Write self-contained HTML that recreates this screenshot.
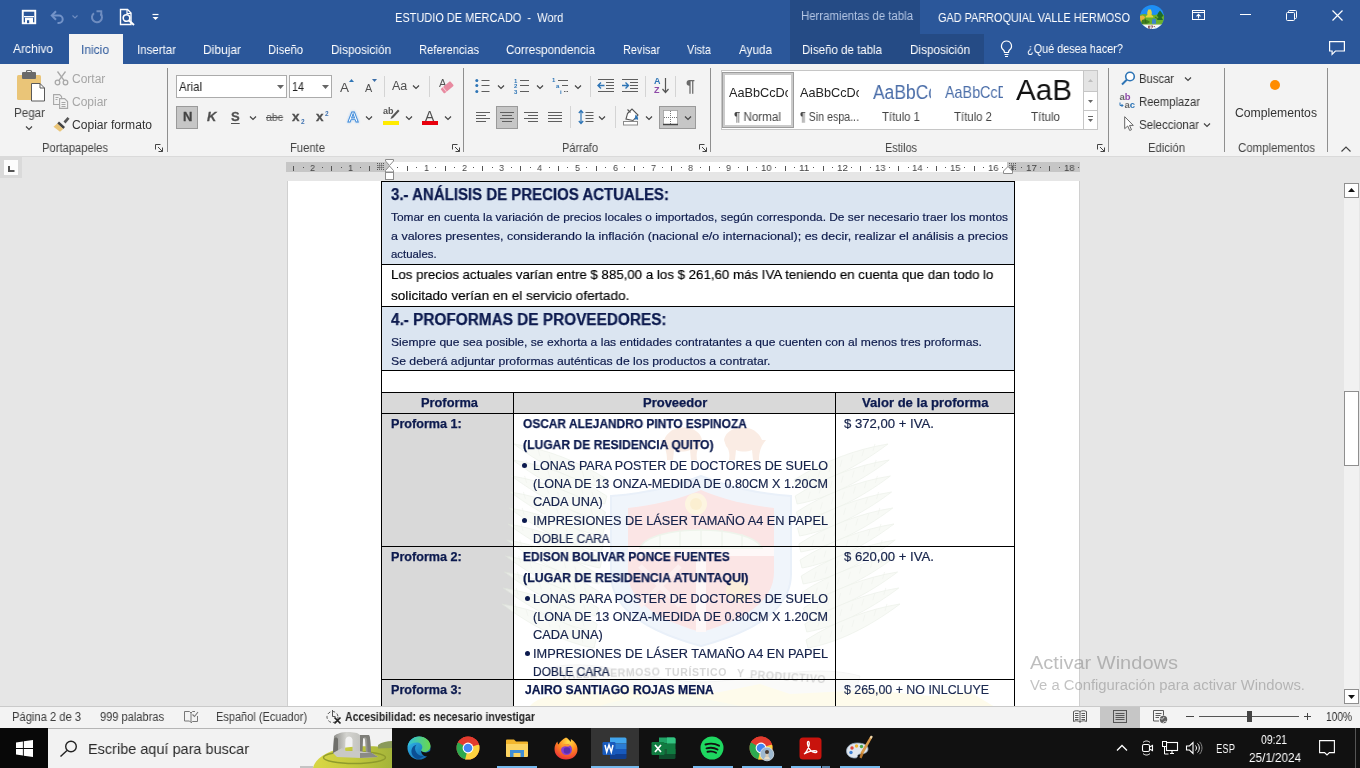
<!DOCTYPE html><html lang="es"><head><meta charset="utf-8"><title>ESTUDIO DE MERCADO - Word</title><style>*{box-sizing:border-box;margin:0;padding:0}
html,body{width:1360px;height:768px;overflow:hidden;background:#e6e6e6}
body{position:relative;font-family:"Liberation Sans",sans-serif;font-size:12px;color:#444}
.t{will-change:transform;position:absolute;white-space:pre;line-height:1;display:block;transform-origin:0 0}
.d{font-family:"Liberation Sans",sans-serif}
.a{position:absolute}
svg{position:absolute;overflow:visible}
svg text{will-change:transform}
.p{display:inline-block;width:0;height:0}
</style></head><body><div class="a" style="left:0;top:0;width:1360px;height:64px;background:#2b579a"></div><div class="a" style="left:790px;top:0;width:130px;height:34px;background:#254b85"></div><div class="a" style="left:790px;top:34px;width:194px;height:30px;background:#254b85"></div><div class="a" style="left:69px;top:34px;width:54px;height:30px;background:#f3f3f3"></div><div class="a" style="left:0;top:64px;width:1360px;height:93px;background:#f3f3f3;border-bottom:1px solid #dadada"></div><span class="t" style="left:395.40px;top:12.00px;font-size:12.6px;color:#fff;transform:scaleX(0.8719);">ESTUDIO DE MERCADO  -  Word</span><span class="t" style="left:800.50px;top:10.00px;font-size:12px;color:#b4c6e4;transform:scaleX(0.9487);">Herramientas de tabla</span><span class="t" style="left:938.00px;top:12.00px;font-size:12.6px;color:#fff;transform:scaleX(0.8636);">GAD PARROQUIAL VALLE HERMOSO</span><span class="t" style="left:13.00px;top:43.00px;font-size:12.6px;color:#fff;transform:scaleX(0.9524);">Archivo</span><span class="t" style="left:81.00px;top:44.00px;font-size:12.6px;color:#2b579a;transform:scaleX(0.9522);">Inicio</span><span class="t" style="left:137.00px;top:44.00px;font-size:12.6px;color:#fff;transform:scaleX(0.9133);">Insertar</span><span class="t" style="left:203.00px;top:44.00px;font-size:12.6px;color:#fff;transform:scaleX(0.9522);">Dibujar</span><span class="t" style="left:268.00px;top:44.00px;font-size:12.6px;color:#fff;transform:scaleX(0.8928);">Diseño</span><span class="t" style="left:331.00px;top:44.00px;font-size:12.6px;color:#fff;transform:scaleX(0.9316);">Disposición</span><span class="t" style="left:419.00px;top:44.00px;font-size:12.6px;color:#fff;transform:scaleX(0.8928);">Referencias</span><span class="t" style="left:506.00px;top:44.00px;font-size:12.6px;color:#fff;transform:scaleX(0.9278);">Correspondencia</span><span class="t" style="left:623.00px;top:44.00px;font-size:12.6px;color:#fff;transform:scaleX(0.8664);">Revisar</span><span class="t" style="left:687.00px;top:44.00px;font-size:12.6px;color:#fff;transform:scaleX(0.8639);">Vista</span><span class="t" style="left:739.00px;top:44.00px;font-size:12.6px;color:#fff;transform:scaleX(0.9300);">Ayuda</span><span class="t" style="left:802.00px;top:44.00px;font-size:12.6px;color:#fff;transform:scaleX(0.9140);">Diseño de tabla</span><span class="t" style="left:910.00px;top:44.00px;font-size:12.6px;color:#fff;transform:scaleX(0.9316);">Disposición</span><span class="t" style="left:1027.00px;top:43.00px;font-size:12.6px;color:#fff;transform:scaleX(0.8623);">¿Qué desea hacer?</span><svg style="left:21px;top:9px" width="16" height="16" viewBox="0 0 16 16" ><rect x="1.750" y="1.750" width="12.500" height="12.500" fill="none" stroke="#fff" stroke-width="1.900"/><rect x="4" y="8.700" width="8" height="5.500" fill="#fff"/><rect x="6" y="11.200" width="2.200" height="3" fill="#2b579a"/><rect x="3" y="7" width="10" height="1.200" fill="#fff"/></svg><svg style="left:50px;top:9px" width="16" height="16" viewBox="0 0 16 16" ><path d="M2.500 6.500h6.500a3.700 3.700 0 0 1 0 7.400h-1.500" fill="none" stroke="#7393c8" stroke-width="2"/><path d="M6 2.200L1.800 6.500l4.200 4.300" fill="none" stroke="#7393c8" stroke-width="2"/></svg><svg style="left:71.5px;top:14.5px" width="6" height="4" viewBox="0 0 6 4" ><path d="M0.500 0.500l2.500 2.500 2.500-2.500" fill="none" stroke="#6f8dc0" stroke-width="1.100"/></svg><svg style="left:89px;top:9px" width="16" height="16" viewBox="0 0 16 16" ><path d="M5 4.300A5 5 0 1 0 11.500 4.800" fill="none" stroke="#6f8dc0" stroke-width="2"/><path d="M7.500 2.200h4.800v4.800" fill="none" stroke="#6f8dc0" stroke-width="1.900"/></svg><svg style="left:119px;top:8px" width="17" height="18" viewBox="0 0 17 18" ><path d="M1.500 1.500h7l3.500 3.500v11.500h-10.500z" fill="none" stroke="#fff" stroke-width="1.400"/><path d="M8 1.500v4h4" fill="none" stroke="#fff" stroke-width="1.200"/><circle cx="7.500" cy="10" r="3.300" fill="#2b579a" stroke="#fff" stroke-width="1.600"/><path d="M10 12.500L15 17" stroke="#fff" stroke-width="2"/></svg><svg style="left:152px;top:13px" width="7" height="8" viewBox="0 0 7 8" ><path d="M0.500 1.500h6" stroke="#fff" stroke-width="1.200"/><path d="M0.500 4h6l-3 3z" fill="#fff"/></svg><svg style="left:1140px;top:4.7px" width="24" height="24" viewBox="0 0 24 24" ><defs><clipPath id="av"><circle cx="12" cy="12" r="12"/></clipPath></defs><g clip-path="url(#av)"><rect width="24" height="24" fill="#1e8ff5"/><path d="M0 10c3-1.500 6-1 8 0l3-0.500 4 0.500c3-1.500 6-1.500 9 0v10h-24z" fill="#6ab02c"/><path d="M7.500 10c-0.800-2 0-4.500 1.500-6 0.500 1 1 1.200 1.500 0 1.200 2 1.800 4 1 6 1 0.500 2 1.500 2 2.500h-8c0-1 1-2 2-2.500z" fill="#e6d33a"/><path d="M0 11c2-1 4-0.500 5 1l-1 4-4 1z" fill="#e8b23a"/><path d="M18 8l2-2.500 2 2.500 1.500 3-2 1 1.500 3h-6l1.500-3-1.500-1z" fill="#1f6b2a"/><path d="M2 15c3-1 6 0 8 2l-3 2h-6z" fill="#3f7d1e"/><path d="M12 19v-3.500a2 2 0 0 1 4 0v3.500z" fill="#3b86c9"/><path d="M5 13.500l1 5M15 12l3 2" stroke="#2f5f18" stroke-width="0.800"/><rect y="19.300" width="24" height="5" fill="#f4f6f8"/><path d="M3 19.300h18" stroke="#9bbf6a" stroke-width="0.800"/><path d="M8.500 21h1.200v2.500h-1.200zM10.500 21h2.500l-1.500 2.500M14 21l1 1.200" stroke="#7a3b3b" stroke-width="0.800" fill="none"/></g></svg><svg style="left:1192px;top:10px" width="13" height="10" viewBox="0 0 13 10" ><rect x="0.500" y="0.500" width="12" height="9" fill="none" stroke="#fff" stroke-width="1"/><path d="M0.500 2.500h12" stroke="#fff" stroke-width="1"/><path d="M6.500 8.500V4.500M4.500 6.300l2-2 2 2" fill="none" stroke="#fff" stroke-width="1.100"/></svg><div class="a" style="left:1240px;top:14px;width:11px;height:1px;background:#fff;"></div><svg style="left:1286px;top:10px" width="11" height="11" viewBox="0 0 11 11" ><rect x="0.500" y="2.500" width="8" height="8" rx="1" fill="none" stroke="#fff" stroke-width="1"/><path d="M2.500 2.500v-1a1 1 0 0 1 1-1h6a1 1 0 0 1 1 1v6a1 1 0 0 1-1 1h-1" fill="none" stroke="#fff" stroke-width="1"/></svg><svg style="left:1332px;top:10px" width="11" height="11" viewBox="0 0 11 11" ><path d="M0.500 0.500l10 10M10.500 0.500l-10 10" stroke="#fff" stroke-width="1.200"/></svg><svg style="left:1000px;top:40px" width="13" height="18" viewBox="0 0 13 18" ><path d="M6.500 1a5 5 0 0 0-3 9c0.800 0.800 1 1.600 1 2.500h4c0-0.900 0.200-1.700 1-2.500a5 5 0 0 0-3-9z" fill="none" stroke="#fff" stroke-width="1.200"/><path d="M4.500 14.500h4M5 16.500h3" stroke="#fff" stroke-width="1.200"/></svg><svg style="left:1329px;top:41px" width="16" height="14" viewBox="0 0 16 14" ><path d="M0.600 0.600h14.800v9.400h-9l-3.300 3.300v-3.300h-2.500z" fill="none" stroke="#fff" stroke-width="1.200"/></svg><svg style="left:16px;top:70px" width="30" height="32" viewBox="0 0 30 32" ><rect x="1" y="5" width="24" height="25" rx="1.500" fill="#eac578"/><rect x="6" y="2" width="14" height="7" rx="1" fill="#6a6a6a"/><rect x="10.500" y="0.500" width="5" height="4" rx="1" fill="none" stroke="#6a6a6a" stroke-width="1.200"/><path d="M15.500 13.500h8.500l4.500 4.500v13h-13z" fill="#fff" stroke="#5a5a5a" stroke-width="1"/><path d="M24 13.500v4.500h4.500" fill="none" stroke="#5a5a5a" stroke-width="1"/></svg><span class="t" style="left:14.00px;top:107.00px;font-size:12px;color:#444;transform:scaleX(0.9678);">Pegar</span><svg style="left:24.5px;top:125px" width="8" height="6" viewBox="0 0 8 6" ><path d="M1 1.5 L4 4.5 L7 1.5" fill="none" stroke="#444" stroke-width="1.2"/></svg><svg style="left:54px;top:71px" width="15" height="15" viewBox="0 0 15 15" ><g fill="none" stroke="#a8a8a8" stroke-width="1.300"><circle cx="3.500" cy="11.500" r="2.300"/><circle cx="11.500" cy="11.500" r="2.300"/><path d="M4.800 9.600L11.500 0.500M10.200 9.600L3.500 0.500"/></g></svg><span class="t" style="left:72.00px;top:73.00px;font-size:12px;color:#a6a6a6;transform:scaleX(0.9897);">Cortar</span><svg style="left:53px;top:94px" width="16" height="15" viewBox="0 0 16 15" ><g fill="none" stroke="#a8a8a8" stroke-width="1.100"><path d="M0.600 0.600h6l2 2v7.900h-8z"/><path d="M6.600 4.600h5l3 3v6.800h-8z" fill="#f3f3f3"/><path d="M8.500 8.500h4M8.500 10.500h4M8.500 12.500h4M2.500 3.500h3M2.500 5.500h2"/></g></svg><span class="t" style="left:72.00px;top:96.00px;font-size:12px;color:#a6a6a6;transform:scaleX(0.9898);">Copiar</span><svg style="left:53px;top:116px" width="17" height="16" viewBox="0 0 17 16" ><path d="M10.500 5.500l4-4.500 2 1.800-4 4.700z" fill="#555"/><path d="M6 5.500l6 5.500-1.800 2-6-5.500z" fill="#444"/><path d="M4.200 7.500l6 5.500-3.200 2.700-6.500-5z" fill="#eac578"/></svg><span class="t" style="left:72.00px;top:119.00px;font-size:12px;color:#333;transform:scaleX(1.0079);">Copiar formato</span><span class="t" style="left:42.00px;top:142.00px;font-size:12px;color:#444;transform:scaleX(0.9333);">Portapapeles</span><svg style="left:155px;top:144px" width="8" height="8" viewBox="0 0 8 8" ><path d="M0.500 5.500v-5h5M3 3l4.500 4.500M7.500 3.500v4h-4" fill="none" stroke="#444" stroke-width="1"/></svg><div class="a" style="left:167px;top:68px;width:1px;height:84px;background:#8f8f8f;"></div><div class="a" style="left:176px;top:75px;width:111px;height:23px;background:#fff;border:1px solid #ababab"></div><span class="t" style="left:179.00px;top:81.00px;font-size:12.6px;color:#222;transform:scaleX(0.9126);">Arial</span><svg style="left:276.5px;top:85px" width="7" height="4" viewBox="0 0 7 4" ><path d="M0 0h7l-3.5 4z" fill="#666"/></svg><div class="a" style="left:289px;top:75px;width:43px;height:23px;background:#fff;border:1px solid #ababab"></div><span class="t" style="left:292.00px;top:81.00px;font-size:12.6px;color:#222;transform:scaleX(0.8562);">14</span><svg style="left:321.5px;top:85px" width="7" height="4" viewBox="0 0 7 4" ><path d="M0 0h7l-3.5 4z" fill="#666"/></svg><span class="t" style="left:340.30px;top:81.00px;font-size:13.5px;color:#505050;">A</span><svg style="left:348.5px;top:79px" width="5" height="3" viewBox="0 0 5 3" ><path d="M0 3h5l-2.500-3z" fill="#2e75b6"/></svg><span class="t" style="left:365.20px;top:83.00px;font-size:10.8px;color:#505050;">A</span><svg style="left:372px;top:79px" width="5" height="3" viewBox="0 0 5 3" ><path d="M0 0h5l-2.500 3z" fill="#3b6ea8"/></svg><div class="a" style="left:384px;top:76px;width:1px;height:21px;background:#d4d4d4;"></div><span class="t" style="left:392.40px;top:80.00px;font-size:12.5px;color:#505050;transform:scaleX(0.9806);">Aa</span><svg style="left:411.5px;top:84px" width="8" height="6" viewBox="0 0 8 6" ><path d="M1 1.5 L4 4.5 L7 1.5" fill="none" stroke="#444" stroke-width="1.2"/></svg><div class="a" style="left:429px;top:76px;width:1px;height:21px;background:#d4d4d4;"></div><span class="t" style="left:438.80px;top:78.00px;font-size:11px;color:#555;">A</span><svg style="left:440px;top:81px" width="14" height="13" viewBox="0 0 14 13" ><g transform="rotate(-40 7 6.500)"><rect x="1" y="3.500" width="12.500" height="6" rx="1" fill="#e88aa0"/><rect x="3.500" y="3.500" width="0.900" height="6" fill="#f6d0d8"/></g></svg><div class="a" style="left:176px;top:106px;width:22px;height:23px;background:#c6c6c6;border:1px solid #9a9a9a"></div><span class="t" style="left:182.50px;top:110.00px;font-size:13px;color:#444;font-weight:700;-webkit-text-stroke:0.3px #444;">N</span><span class="t" style="left:206.50px;top:110.00px;font-size:13px;color:#505050;font-weight:700;font-style:italic;-webkit-text-stroke:0.3px #505050;">K</span><span class="t" style="left:230.50px;top:110.00px;font-size:13px;color:#505050;font-weight:700;-webkit-text-stroke:0.3px #505050;text-decoration:underline;text-underline-offset:2px">S</span><svg style="left:248.5px;top:115px" width="8" height="6" viewBox="0 0 8 6" ><path d="M1 1.5 L4 4.5 L7 1.5" fill="none" stroke="#444" stroke-width="1.2"/></svg><span class="t" style="left:266.00px;top:112.00px;font-size:11px;color:#555;transform:scaleX(0.9577);text-decoration:line-through">abc</span><span class="t" style="left:292.00px;top:110.00px;font-size:13.5px;color:#505050;font-weight:700;-webkit-text-stroke:0.3px #505050;">x</span><span class="t" style="left:300.50px;top:119.00px;font-size:6.5px;color:#3f72b0;font-weight:700;">2</span><span class="t" style="left:316.00px;top:110.00px;font-size:13.5px;color:#505050;font-weight:700;-webkit-text-stroke:0.3px #505050;">x</span><span class="t" style="left:324.50px;top:111.00px;font-size:6.5px;color:#3f72b0;font-weight:700;">2</span><svg style="left:345px;top:108px" width="17" height="17" viewBox="0 0 17 17" ><text x="8" y="14" text-anchor="middle" font-family="Liberation Sans,sans-serif" font-size="15.500" font-weight="700" fill="#fff" stroke="#3f8ad8" stroke-width="0.900" style="filter:drop-shadow(0 0 1px #9cc8f5)">A</text></svg><svg style="left:365px;top:115px" width="8" height="6" viewBox="0 0 8 6" ><path d="M1 1.5 L4 4.5 L7 1.5" fill="none" stroke="#444" stroke-width="1.2"/></svg><span class="t" style="left:383.00px;top:107.00px;font-size:9px;color:#555;font-weight:700;">ab</span><svg style="left:389px;top:109px" width="11" height="11" viewBox="0 0 11 11" ><path d="M9 0.500l1.500 1.500-6.500 7-2.500 1 1-2.500z" fill="#555"/></svg><div class="a" style="left:383px;top:121px;width:16px;height:4px;background:#ffeb00;"></div><svg style="left:404.5px;top:115px" width="8" height="6" viewBox="0 0 8 6" ><path d="M1 1.5 L4 4.5 L7 1.5" fill="none" stroke="#444" stroke-width="1.2"/></svg><span class="t" style="left:425.30px;top:110.00px;font-size:13.8px;color:#505050;">A</span><div class="a" style="left:422px;top:121px;width:16px;height:4px;background:#e8000d;"></div><svg style="left:443.5px;top:115px" width="8" height="6" viewBox="0 0 8 6" ><path d="M1 1.5 L4 4.5 L7 1.5" fill="none" stroke="#444" stroke-width="1.2"/></svg><span class="t" style="left:290.00px;top:142.00px;font-size:12px;color:#444;transform:scaleX(0.9368);">Fuente</span><svg style="left:452px;top:144px" width="8" height="8" viewBox="0 0 8 8" ><path d="M0.500 5.500v-5h5M3 3l4.500 4.500M7.500 3.500v4h-4" fill="none" stroke="#444" stroke-width="1"/></svg><div class="a" style="left:463px;top:68px;width:1px;height:84px;background:#8f8f8f;"></div><svg style="left:475px;top:78px" width="16" height="16" viewBox="0 0 16 16" ><g fill="#2e75b6"><circle cx="1.800" cy="2.500" r="1.500"/><circle cx="1.800" cy="7.500" r="1.500"/><circle cx="1.800" cy="13.500" r="1.500"/></g><path d="M6.500 2.500h8M6.500 7.500h8M6.500 13.500h8" stroke="#5e5e5e" stroke-width="1"/></svg><svg style="left:496.5px;top:84px" width="8" height="6" viewBox="0 0 8 6" ><path d="M1 1.5 L4 4.5 L7 1.5" fill="none" stroke="#444" stroke-width="1.2"/></svg><svg style="left:514px;top:77px" width="16" height="18" viewBox="0 0 16 18" ><path d="M6 3.500h9M6 8.500h9M6 14.500h9" stroke="#5e5e5e" stroke-width="1"/><g font-family="Liberation Sans,sans-serif" font-size="6" font-weight="700" fill="#2e75b6"><text x="0" y="5.500">1</text><text x="0" y="11">2</text><text x="0" y="16.500">3</text></g></svg><svg style="left:535.5px;top:84px" width="8" height="6" viewBox="0 0 8 6" ><path d="M1 1.5 L4 4.5 L7 1.5" fill="none" stroke="#444" stroke-width="1.2"/></svg><svg style="left:552px;top:77px" width="17" height="18" viewBox="0 0 17 18" ><path d="M6 3.500h10M10 8.500h6M12 14.500h1.500M14.500 14.500h1.500" stroke="#5e5e5e" stroke-width="1"/><g font-family="Liberation Sans,sans-serif" font-size="6" font-weight="700" fill="#2e75b6"><text x="0" y="5">1</text><text x="4" y="11">a</text><text x="8" y="17">i</text></g></svg><svg style="left:573.5px;top:84px" width="8" height="6" viewBox="0 0 8 6" ><path d="M1 1.5 L4 4.5 L7 1.5" fill="none" stroke="#444" stroke-width="1.2"/></svg><div class="a" style="left:590px;top:76px;width:1px;height:21px;background:#d4d4d4;"></div><svg style="left:598px;top:78px" width="16" height="15" viewBox="0 0 16 15" ><path d="M0 1.500h16M8 4.500h8M8 7.500h8M8 10.500h8M0 13.500h16" stroke="#5e5e5e" stroke-width="1"/><path d="M6.500 7.500h-6M3 4.500l-3 3 3 3" fill="none" stroke="#2e75b6" stroke-width="1.400"/></svg><svg style="left:622px;top:78px" width="16" height="15" viewBox="0 0 16 15" ><path d="M0 1.500h16M8 4.500h8M8 7.500h8M8 10.500h8M0 13.500h16" stroke="#5e5e5e" stroke-width="1"/><path d="M0 7.500h6M3.500 4.500l3 3-3 3" fill="none" stroke="#2e75b6" stroke-width="1.400"/></svg><div class="a" style="left:645px;top:76px;width:1px;height:21px;background:#d4d4d4;"></div><svg style="left:654px;top:76px" width="15" height="19" viewBox="0 0 15 19" ><g font-family="Liberation Sans,sans-serif" font-size="9" font-weight="700"><text x="0" y="8" fill="#2e75b6">A</text><text x="0" y="17" fill="#8e4aa8">Z</text></g><path d="M11.500 2v14M8.500 13l3 3.500 3-3.500" fill="none" stroke="#555" stroke-width="1.200"/></svg><div class="a" style="left:675px;top:76px;width:1px;height:21px;background:#d4d4d4;"></div><span class="t" style="left:686.00px;top:79.00px;font-size:16px;color:#6a6a6a;font-weight:700;">¶</span><svg style="left:476px;top:112px" width="14" height="12" viewBox="0 0 14 12" ><path d="M0 0.5h14" stroke="#5e5e5e" stroke-width="1"/><path d="M0 3.5h10" stroke="#5e5e5e" stroke-width="1"/><path d="M0 6.5h14" stroke="#5e5e5e" stroke-width="1"/><path d="M0 9.5h10" stroke="#5e5e5e" stroke-width="1"/></svg><div class="a" style="left:496px;top:106px;width:22px;height:23px;background:#c6c6c6;border:1px solid #9a9a9a"></div><svg style="left:500px;top:112px" width="14" height="12" viewBox="0 0 14 12" ><path d="M0.0 0.5h14" stroke="#5e5e5e" stroke-width="1"/><path d="M2.0 3.5h10" stroke="#5e5e5e" stroke-width="1"/><path d="M0.0 6.5h14" stroke="#5e5e5e" stroke-width="1"/><path d="M2.0 9.5h10" stroke="#5e5e5e" stroke-width="1"/></svg><svg style="left:524px;top:112px" width="14" height="12" viewBox="0 0 14 12" ><path d="M0 0.5h14" stroke="#5e5e5e" stroke-width="1"/><path d="M4 3.5h10" stroke="#5e5e5e" stroke-width="1"/><path d="M0 6.5h14" stroke="#5e5e5e" stroke-width="1"/><path d="M4 9.5h10" stroke="#5e5e5e" stroke-width="1"/></svg><svg style="left:548px;top:112px" width="14" height="12" viewBox="0 0 14 12" ><path d="M0 0.5h14" stroke="#5e5e5e" stroke-width="1"/><path d="M0 3.5h14" stroke="#5e5e5e" stroke-width="1"/><path d="M0 6.5h14" stroke="#5e5e5e" stroke-width="1"/><path d="M0 9.5h14" stroke="#5e5e5e" stroke-width="1"/></svg><div class="a" style="left:570px;top:106px;width:1px;height:22px;background:#d4d4d4;"></div><svg style="left:578px;top:109px" width="16" height="17" viewBox="0 0 16 17" ><path d="M7.500 3.500h8M7.500 6.500h8M7.500 9.500h8M7.500 12.500h8" stroke="#5e5e5e" stroke-width="1"/><path d="M3 1.500v13M0.800 4l2.200-2.500 2.200 2.500M0.800 12l2.200 2.500 2.200-2.500" fill="none" stroke="#2e75b6" stroke-width="1.200"/></svg><svg style="left:597.5px;top:115px" width="8" height="6" viewBox="0 0 8 6" ><path d="M1 1.5 L4 4.5 L7 1.5" fill="none" stroke="#444" stroke-width="1.2"/></svg><div class="a" style="left:615px;top:106px;width:1px;height:22px;background:#d4d4d4;"></div><svg style="left:622px;top:108px" width="18" height="18" viewBox="0 0 18 18" ><path d="M5.500 5.500l4.500-4.500 6 6-5 5.500-7-1.500z" fill="#fff" stroke="#555" stroke-width="1.100"/><path d="M5.500 1.500l3 3" stroke="#555" stroke-width="1.100"/><path d="M13.500 6.500c2 1.500 3 3.500 2.500 5.500-1-1-2.500-1-3.500 0z" fill="#2e75b6"/><rect x="1.500" y="13.500" width="14" height="3.500" fill="#fff" stroke="#8a8a8a" stroke-width="1"/></svg><svg style="left:644.5px;top:115px" width="8" height="6" viewBox="0 0 8 6" ><path d="M1 1.5 L4 4.5 L7 1.5" fill="none" stroke="#444" stroke-width="1.2"/></svg><div class="a" style="left:659px;top:106px;width:37px;height:23px;background:#c6c6c6;border:1px solid #9a9a9a"></div><svg style="left:663px;top:110px" width="15" height="15" viewBox="0 0 15 15" ><rect x="0.500" y="0.500" width="14" height="14" fill="#fff" stroke="#777" stroke-width="1" stroke-dasharray="1 1"/><path d="M7.500 1v13M1 7.500h13" stroke="#777" stroke-width="1" stroke-dasharray="1 1"/><path d="M0 14.500h15" stroke="#444" stroke-width="1.500"/></svg><svg style="left:683.5px;top:115px" width="8" height="6" viewBox="0 0 8 6" ><path d="M1 1.5 L4 4.5 L7 1.5" fill="none" stroke="#444" stroke-width="1.2"/></svg><span class="t" style="left:562.00px;top:142.00px;font-size:12px;color:#444;transform:scaleX(0.9146);">Párrafo</span><svg style="left:699px;top:144px" width="8" height="8" viewBox="0 0 8 8" ><path d="M0.500 5.500v-5h5M3 3l4.500 4.500M7.500 3.500v4h-4" fill="none" stroke="#444" stroke-width="1"/></svg><div class="a" style="left:710px;top:68px;width:1px;height:84px;background:#8f8f8f;"></div><div class="a" style="left:721px;top:70px;width:377px;height:60px;background:#fff;border:1px solid #c6c6c6"></div><div class="a" style="left:722px;top:72px;width:72px;height:56px;background:#fff;border:1px solid #9d9d9d;box-shadow:inset 0 0 0 2px #cbcbcb"></div><div class="a" style="left:729px;top:80px;width:58.5px;height:22px;overflow:hidden"><span class="t" style="left:0.00px;top:7.00px;font-size:12.7px;color:#222;transform:scaleX(0.9990);">AaBbCcDc</span></div><span class="t" style="left:734.00px;top:111.00px;font-size:12px;color:#444;transform:scaleX(0.9700);">¶ Normal</span><div class="a" style="left:800px;top:80px;width:58.5px;height:22px;overflow:hidden"><span class="t" style="left:0.00px;top:7.00px;font-size:12.7px;color:#222;transform:scaleX(0.9990);">AaBbCcDc</span></div><span class="t" style="left:800.00px;top:111.00px;font-size:12px;color:#444;transform:scaleX(0.8874);">¶ Sin espa...</span><div class="a" style="left:872.5px;top:76px;width:58.5px;height:28px;overflow:hidden"><span class="t" style="left:0.00px;top:6.00px;font-size:20px;color:#4a6da8;transform:scaleX(0.8722);">AaBbCc</span></div><span class="t" style="left:882.00px;top:111.00px;font-size:12px;color:#444;transform:scaleX(0.9493);">Título 1</span><div class="a" style="left:944.5px;top:76px;width:58.5px;height:28px;overflow:hidden"><span class="t" style="left:0.00px;top:8.00px;font-size:17px;color:#4a6da8;transform:scaleX(0.8440);">AaBbCcD</span></div><span class="t" style="left:954.00px;top:111.00px;font-size:12px;color:#444;transform:scaleX(0.9493);">Título 2</span><div class="a" style="left:1016px;top:78.5px;width:58px;height:24px;overflow:hidden"><span class="t" style="left:0.00px;top:-4.00px;font-size:30px;color:#111;transform:scaleX(0.9873);">AaB</span></div><span class="t" style="left:1031.00px;top:111.00px;font-size:12px;color:#444;transform:scaleX(0.9662);">Título</span><div class="a" style="left:1083px;top:70px;width:15px;height:22px;background:#e4e4e4;border:1px solid #c6c6c6"></div><div class="a" style="left:1083px;top:91px;width:15px;height:20px;background:#fff;border:1px solid #c6c6c6"></div><div class="a" style="left:1083px;top:110px;width:15px;height:20px;background:#fff;border:1px solid #c6c6c6"></div><svg style="left:1088px;top:79px" width="5" height="3" viewBox="0 0 5 3" ><path d="M0 3h5l-2.500-3z" fill="#bdbdbd"/></svg><svg style="left:1088px;top:100px" width="5" height="3" viewBox="0 0 5 3" ><path d="M0 0h5l-2.500 3z" fill="#666"/></svg><svg style="left:1088px;top:116px" width="5" height="7" viewBox="0 0 5 7" ><path d="M0 0.500h5" stroke="#666" stroke-width="1"/><path d="M0 3h5l-2.500 3z" fill="#666"/></svg><span class="t" style="left:885.00px;top:142.00px;font-size:12px;color:#444;transform:scaleX(0.9054);">Estilos</span><svg style="left:1097px;top:144px" width="8" height="8" viewBox="0 0 8 8" ><path d="M0.500 5.500v-5h5M3 3l4.500 4.500M7.500 3.500v4h-4" fill="none" stroke="#444" stroke-width="1"/></svg><div class="a" style="left:1108px;top:68px;width:1px;height:84px;background:#8f8f8f;"></div><svg style="left:1121px;top:71px" width="15" height="14" viewBox="0 0 15 14" ><circle cx="9" cy="5.500" r="4.300" fill="#fff" stroke="#2e75b6" stroke-width="1.600"/><path d="M6 8.500l-5 5" stroke="#2e75b6" stroke-width="2"/></svg><span class="t" style="left:1139.00px;top:73.00px;font-size:12px;color:#333;transform:scaleX(0.9368);">Buscar</span><svg style="left:1183.5px;top:76px" width="8" height="6" viewBox="0 0 8 6" ><path d="M1 1.5 L4 4.5 L7 1.5" fill="none" stroke="#444" stroke-width="1.2"/></svg><svg style="left:1119px;top:93px" width="18" height="16" viewBox="0 0 18 16" ><g font-family="Liberation Sans,sans-serif" font-weight="700"><text x="0.500" y="7" font-size="9.500"><tspan fill="#666">a</tspan><tspan fill="#8e4aa8">b</tspan></text><text x="5.500" y="14.500" font-size="9.500"><tspan fill="#666">a</tspan><tspan fill="#2e75b6">c</tspan></text></g><path d="M1 9.500v3h3M2.500 11l1.500 1.500-1.500 1.500" fill="none" stroke="#2e75b6" stroke-width="1"/></svg><span class="t" style="left:1139.00px;top:96.00px;font-size:12px;color:#333;transform:scaleX(0.9428);">Reemplazar</span><svg style="left:1124px;top:116px" width="10" height="16" viewBox="0 0 10 16" ><path d="M0.700 0.700v12l3-2.700 2 4.500 1.800-0.800-2-4.300h3.800z" fill="#fff" stroke="#666" stroke-width="1"/></svg><span class="t" style="left:1139.00px;top:119.00px;font-size:12px;color:#333;transform:scaleX(0.9569);">Seleccionar</span><svg style="left:1202.5px;top:122px" width="8" height="6" viewBox="0 0 8 6" ><path d="M1 1.5 L4 4.5 L7 1.5" fill="none" stroke="#444" stroke-width="1.2"/></svg><span class="t" style="left:1148.00px;top:142.00px;font-size:12px;color:#444;transform:scaleX(0.9401);">Edición</span><div class="a" style="left:1224px;top:68px;width:1px;height:84px;background:#8f8f8f;"></div><div class="a" style="left:1270px;top:80px;width:10px;height:10px;border-radius:50%;background:#ff8c00;filter:blur(0.5px)"></div><span class="t" style="left:1235.00px;top:107.00px;font-size:12px;color:#333;transform:scaleX(1.0161);">Complementos</span><span class="t" style="left:1238.00px;top:142.00px;font-size:12px;color:#444;transform:scaleX(0.9541);">Complementos</span><div class="a" style="left:1327px;top:68px;width:1px;height:84px;background:#8f8f8f;"></div><svg style="left:1341px;top:146px" width="10" height="6" viewBox="0 0 10 6" ><path d="M0.500 5.500l4.500-4.500 4.500 4.500" fill="none" stroke="#444" stroke-width="1.200"/></svg><div class="a" style="left:0px;top:157px;width:22px;height:21px;background:#dadada;"></div><div class="a" style="left:4px;top:160px;width:14px;height:15px;background:#fdfdfd;"></div><svg style="left:8px;top:166px" width="7" height="7" viewBox="0 0 7 7" ><path d="M1 0v5h5.500" fill="none" stroke="#555" stroke-width="2"/></svg><div class="a" style="left:286px;top:162px;width:794px;height:10px;background:#c6c6c6;"></div><div class="a" style="left:389px;top:162px;width:618px;height:10px;background:#fff;"></div><svg style="left:286px;top:162px" width="794" height="10" viewBox="0 0 794 10" ><rect x="7" y="4" width="1" height="5" fill="#555"/><rect x="17" y="5" width="1" height="1" fill="#555"/><rect x="36" y="5" width="1" height="1" fill="#555"/><rect x="45" y="4" width="1" height="5" fill="#555"/><rect x="55" y="5" width="1" height="1" fill="#555"/><rect x="74" y="5" width="1" height="1" fill="#555"/><rect x="83" y="4" width="1" height="5" fill="#555"/><rect x="92" y="5" width="1" height="1" fill="#555"/><rect x="111" y="5" width="1" height="1" fill="#555"/><rect x="121" y="4" width="1" height="5" fill="#555"/><rect x="130" y="5" width="1" height="1" fill="#555"/><rect x="149" y="5" width="1" height="1" fill="#555"/><rect x="159" y="4" width="1" height="5" fill="#555"/><rect x="168" y="5" width="1" height="1" fill="#555"/><rect x="187" y="5" width="1" height="1" fill="#555"/><rect x="196" y="4" width="1" height="5" fill="#555"/><rect x="206" y="5" width="1" height="1" fill="#555"/><rect x="225" y="5" width="1" height="1" fill="#555"/><rect x="234" y="4" width="1" height="5" fill="#555"/><rect x="244" y="5" width="1" height="1" fill="#555"/><rect x="263" y="5" width="1" height="1" fill="#555"/><rect x="272" y="4" width="1" height="5" fill="#555"/><rect x="281" y="5" width="1" height="1" fill="#555"/><rect x="300" y="5" width="1" height="1" fill="#555"/><rect x="310" y="4" width="1" height="5" fill="#555"/><rect x="319" y="5" width="1" height="1" fill="#555"/><rect x="338" y="5" width="1" height="1" fill="#555"/><rect x="348" y="4" width="1" height="5" fill="#555"/><rect x="357" y="5" width="1" height="1" fill="#555"/><rect x="376" y="5" width="1" height="1" fill="#555"/><rect x="385" y="4" width="1" height="5" fill="#555"/><rect x="395" y="5" width="1" height="1" fill="#555"/><rect x="414" y="5" width="1" height="1" fill="#555"/><rect x="423" y="4" width="1" height="5" fill="#555"/><rect x="433" y="5" width="1" height="1" fill="#555"/><rect x="452" y="5" width="1" height="1" fill="#555"/><rect x="461" y="4" width="1" height="5" fill="#555"/><rect x="470" y="5" width="1" height="1" fill="#555"/><rect x="489" y="5" width="1" height="1" fill="#555"/><rect x="499" y="4" width="1" height="5" fill="#555"/><rect x="508" y="5" width="1" height="1" fill="#555"/><rect x="527" y="5" width="1" height="1" fill="#555"/><rect x="537" y="4" width="1" height="5" fill="#555"/><rect x="546" y="5" width="1" height="1" fill="#555"/><rect x="565" y="5" width="1" height="1" fill="#555"/><rect x="574" y="4" width="1" height="5" fill="#555"/><rect x="584" y="5" width="1" height="1" fill="#555"/><rect x="603" y="5" width="1" height="1" fill="#555"/><rect x="612" y="4" width="1" height="5" fill="#555"/><rect x="622" y="5" width="1" height="1" fill="#555"/><rect x="641" y="5" width="1" height="1" fill="#555"/><rect x="650" y="4" width="1" height="5" fill="#555"/><rect x="659" y="5" width="1" height="1" fill="#555"/><rect x="678" y="5" width="1" height="1" fill="#555"/><rect x="688" y="4" width="1" height="5" fill="#555"/><rect x="697" y="5" width="1" height="1" fill="#555"/><rect x="716" y="5" width="1" height="1" fill="#555"/><rect x="726" y="4" width="1" height="5" fill="#555"/><rect x="735" y="5" width="1" height="1" fill="#555"/><rect x="754" y="5" width="1" height="1" fill="#555"/><rect x="763" y="4" width="1" height="5" fill="#555"/><rect x="773" y="5" width="1" height="1" fill="#555"/><rect x="792" y="5" width="1" height="1" fill="#555"/></svg><span class="t" style="left:423.80px;top:163.00px;font-size:9.9px;color:#444;transform:scaleX(0.9091);">1</span><span class="t" style="left:461.60px;top:163.00px;font-size:9.9px;color:#444;transform:scaleX(0.9091);">2</span><span class="t" style="left:499.40px;top:163.00px;font-size:9.9px;color:#444;transform:scaleX(0.9091);">3</span><span class="t" style="left:537.20px;top:163.00px;font-size:9.9px;color:#444;transform:scaleX(0.9091);">4</span><span class="t" style="left:575.00px;top:163.00px;font-size:9.9px;color:#444;transform:scaleX(0.9091);">5</span><span class="t" style="left:612.80px;top:163.00px;font-size:9.9px;color:#444;transform:scaleX(0.9091);">6</span><span class="t" style="left:650.60px;top:163.00px;font-size:9.9px;color:#444;transform:scaleX(0.9091);">7</span><span class="t" style="left:688.40px;top:163.00px;font-size:9.9px;color:#444;transform:scaleX(0.9091);">8</span><span class="t" style="left:726.20px;top:163.00px;font-size:9.9px;color:#444;transform:scaleX(0.9091);">9</span><span class="t" style="left:761.25px;top:163.00px;font-size:9.9px;color:#444;transform:scaleX(0.9559);">10</span><span class="t" style="left:799.05px;top:163.00px;font-size:9.9px;color:#444;transform:scaleX(1.0244);">11</span><span class="t" style="left:836.85px;top:163.00px;font-size:9.9px;color:#444;transform:scaleX(0.9559);">12</span><span class="t" style="left:874.65px;top:163.00px;font-size:9.9px;color:#444;transform:scaleX(0.9559);">13</span><span class="t" style="left:912.45px;top:163.00px;font-size:9.9px;color:#444;transform:scaleX(0.9559);">14</span><span class="t" style="left:950.25px;top:163.00px;font-size:9.9px;color:#444;transform:scaleX(0.9559);">15</span><span class="t" style="left:988.05px;top:163.00px;font-size:9.9px;color:#444;transform:scaleX(0.9559);">16</span><span class="t" style="left:1025.85px;top:163.00px;font-size:9.9px;color:#444;transform:scaleX(0.9559);">17</span><span class="t" style="left:1063.65px;top:163.00px;font-size:9.9px;color:#444;transform:scaleX(0.9559);">18</span><span class="t" style="left:348.10px;top:163.00px;font-size:9.9px;color:#444;transform:scaleX(0.9091);">1</span><span class="t" style="left:310.30px;top:163.00px;font-size:9.9px;color:#444;transform:scaleX(0.9091);">2</span><svg style="left:377px;top:163px" width="7" height="8" viewBox="0 0 7 8" ><rect x="0" y="0" width="1" height="1" fill="#555"/><rect x="0" y="2" width="1" height="1" fill="#555"/><rect x="0" y="4" width="1" height="1" fill="#555"/><rect x="0" y="6" width="1" height="1" fill="#555"/><rect x="2" y="0" width="1" height="1" fill="#555"/><rect x="2" y="2" width="1" height="1" fill="#555"/><rect x="2" y="4" width="1" height="1" fill="#555"/><rect x="2" y="6" width="1" height="1" fill="#555"/><rect x="4" y="0" width="1" height="1" fill="#555"/><rect x="4" y="2" width="1" height="1" fill="#555"/><rect x="4" y="4" width="1" height="1" fill="#555"/><rect x="4" y="6" width="1" height="1" fill="#555"/><rect x="6" y="0" width="1" height="1" fill="#555"/><rect x="6" y="2" width="1" height="1" fill="#555"/><rect x="6" y="4" width="1" height="1" fill="#555"/><rect x="6" y="6" width="1" height="1" fill="#555"/><path d="M0 2.500h7M0 4.500h7" stroke="#777" stroke-width="0.600"/><path d="M2.500 0v7M4.500 0v7" stroke="#777" stroke-width="0.600"/></svg><svg style="left:1009px;top:163px" width="7" height="8" viewBox="0 0 7 8" ><rect x="0" y="0" width="1" height="1" fill="#555"/><rect x="0" y="2" width="1" height="1" fill="#555"/><rect x="0" y="4" width="1" height="1" fill="#555"/><rect x="0" y="6" width="1" height="1" fill="#555"/><rect x="2" y="0" width="1" height="1" fill="#555"/><rect x="2" y="2" width="1" height="1" fill="#555"/><rect x="2" y="4" width="1" height="1" fill="#555"/><rect x="2" y="6" width="1" height="1" fill="#555"/><rect x="4" y="0" width="1" height="1" fill="#555"/><rect x="4" y="2" width="1" height="1" fill="#555"/><rect x="4" y="4" width="1" height="1" fill="#555"/><rect x="4" y="6" width="1" height="1" fill="#555"/><rect x="6" y="0" width="1" height="1" fill="#555"/><rect x="6" y="2" width="1" height="1" fill="#555"/><rect x="6" y="4" width="1" height="1" fill="#555"/><rect x="6" y="6" width="1" height="1" fill="#555"/><path d="M0 2.500h7M0 4.500h7" stroke="#777" stroke-width="0.600"/><path d="M2.500 0v7M4.500 0v7" stroke="#777" stroke-width="0.600"/></svg><svg style="left:385px;top:159px" width="9" height="22" viewBox="0 0 9 22" ><path d="M0.500 0.500h8v1.500l-4 4.500l-4-4.500z" fill="#fff" stroke="#8c8c8c" stroke-width="1"/><path d="M4.500 7l4 4.500v1.500h-8v-1.500z" fill="#fff" stroke="#8c8c8c" stroke-width="1"/><rect x="0.500" y="13.500" width="8" height="7" fill="#fff" stroke="#8c8c8c" stroke-width="1"/></svg><svg style="left:1003px;top:166px" width="10" height="8" viewBox="0 0 10 8" ><path d="M5 0.500l4.500 4.500v2.500h-9v-2.500z" fill="#fff" stroke="#8c8c8c" stroke-width="1"/></svg><div class="a" style="left:287px;top:181px;width:793px;height:525px;background:#fff;border-left:1px solid #d0d0d0;border-right:1px solid #d0d0d0"></div><div class="a" id="doc" style="left:288px;top:180px;width:791px;height:526px;overflow:hidden"><div class="a" style="left:-288px;top:-180px;width:1360px;height:768px"><div class="a" style="left:382px;top:181px;width:633px;height:83px;background:#dbe5f1;"></div><div class="a" style="left:382px;top:306px;width:633px;height:64px;background:#dbe5f1;"></div><div class="a" style="left:382px;top:392px;width:633px;height:21px;background:#d9d9d9;"></div><div class="a" style="left:382px;top:413px;width:131px;height:300px;background:#d9d9d9;"></div><svg style="left:0;top:0;opacity:0.58;filter:blur(0.7px)" width="1360" height="768" viewBox="0 0 1360 768"><path d="M606.0 488c-28-5-60-20-92-44 32 5 66 18 94 36z" fill="#f3f6f0" stroke="#e1e8dc" stroke-width="0.800"/><path d="M796.0 488c28-5 60-20 92-44-32 5-66 18-94 36z" fill="#f3f6f0" stroke="#e1e8dc" stroke-width="0.800"/><path d="M807.0 482.7l2-7" stroke="#e4eadf" stroke-width="0.700"/><path d="M595.0 482.7l-2-7" stroke="#e4eadf" stroke-width="0.700"/><path d="M818.0 477.4l2-7" stroke="#e4eadf" stroke-width="0.700"/><path d="M584.0 477.4l-2-7" stroke="#e4eadf" stroke-width="0.700"/><path d="M829.0 472.1l2-7" stroke="#e4eadf" stroke-width="0.700"/><path d="M573.0 472.1l-2-7" stroke="#e4eadf" stroke-width="0.700"/><path d="M840.0 466.8l2-7" stroke="#e4eadf" stroke-width="0.700"/><path d="M562.0 466.8l-2-7" stroke="#e4eadf" stroke-width="0.700"/><path d="M851.0 461.5l2-7" stroke="#e4eadf" stroke-width="0.700"/><path d="M551.0 461.5l-2-7" stroke="#e4eadf" stroke-width="0.700"/><path d="M862.0 456.2l2-7" stroke="#e4eadf" stroke-width="0.700"/><path d="M540.0 456.2l-2-7" stroke="#e4eadf" stroke-width="0.700"/><path d="M873.0 450.9l2-7" stroke="#e4eadf" stroke-width="0.700"/><path d="M529.0 450.9l-2-7" stroke="#e4eadf" stroke-width="0.700"/><path d="M604.8 504c-28-5-60-20-92-44 32 5 66 18 94 36z" fill="#f3f6f0" stroke="#e1e8dc" stroke-width="0.800"/><path d="M797.2 504c28-5 60-20 92-44-32 5-66 18-94 36z" fill="#f3f6f0" stroke="#e1e8dc" stroke-width="0.800"/><path d="M808.2 498.7l2-7" stroke="#e4eadf" stroke-width="0.700"/><path d="M593.8 498.7l-2-7" stroke="#e4eadf" stroke-width="0.700"/><path d="M819.2 493.4l2-7" stroke="#e4eadf" stroke-width="0.700"/><path d="M582.8 493.4l-2-7" stroke="#e4eadf" stroke-width="0.700"/><path d="M830.2 488.1l2-7" stroke="#e4eadf" stroke-width="0.700"/><path d="M571.8 488.1l-2-7" stroke="#e4eadf" stroke-width="0.700"/><path d="M841.2 482.8l2-7" stroke="#e4eadf" stroke-width="0.700"/><path d="M560.8 482.8l-2-7" stroke="#e4eadf" stroke-width="0.700"/><path d="M852.2 477.5l2-7" stroke="#e4eadf" stroke-width="0.700"/><path d="M549.8 477.5l-2-7" stroke="#e4eadf" stroke-width="0.700"/><path d="M863.2 472.2l2-7" stroke="#e4eadf" stroke-width="0.700"/><path d="M538.8 472.2l-2-7" stroke="#e4eadf" stroke-width="0.700"/><path d="M874.2 466.9l2-7" stroke="#e4eadf" stroke-width="0.700"/><path d="M527.8 466.9l-2-7" stroke="#e4eadf" stroke-width="0.700"/><path d="M603.6 520c-28-5-60-20-92-44 32 5 66 18 94 36z" fill="#f3f6f0" stroke="#e1e8dc" stroke-width="0.800"/><path d="M798.4 520c28-5 60-20 92-44-32 5-66 18-94 36z" fill="#f3f6f0" stroke="#e1e8dc" stroke-width="0.800"/><path d="M809.4 514.7l2-7" stroke="#e4eadf" stroke-width="0.700"/><path d="M592.6 514.7l-2-7" stroke="#e4eadf" stroke-width="0.700"/><path d="M820.4 509.4l2-7" stroke="#e4eadf" stroke-width="0.700"/><path d="M581.6 509.4l-2-7" stroke="#e4eadf" stroke-width="0.700"/><path d="M831.4 504.1l2-7" stroke="#e4eadf" stroke-width="0.700"/><path d="M570.6 504.1l-2-7" stroke="#e4eadf" stroke-width="0.700"/><path d="M842.4 498.8l2-7" stroke="#e4eadf" stroke-width="0.700"/><path d="M559.6 498.8l-2-7" stroke="#e4eadf" stroke-width="0.700"/><path d="M853.4 493.5l2-7" stroke="#e4eadf" stroke-width="0.700"/><path d="M548.6 493.5l-2-7" stroke="#e4eadf" stroke-width="0.700"/><path d="M864.4 488.2l2-7" stroke="#e4eadf" stroke-width="0.700"/><path d="M537.6 488.2l-2-7" stroke="#e4eadf" stroke-width="0.700"/><path d="M875.4 482.9l2-7" stroke="#e4eadf" stroke-width="0.700"/><path d="M526.6 482.9l-2-7" stroke="#e4eadf" stroke-width="0.700"/><path d="M602.4 536c-28-5-60-20-92-44 32 5 66 18 94 36z" fill="#f3f6f0" stroke="#e1e8dc" stroke-width="0.800"/><path d="M799.6 536c28-5 60-20 92-44-32 5-66 18-94 36z" fill="#f3f6f0" stroke="#e1e8dc" stroke-width="0.800"/><path d="M810.6 530.7l2-7" stroke="#e4eadf" stroke-width="0.700"/><path d="M591.4 530.7l-2-7" stroke="#e4eadf" stroke-width="0.700"/><path d="M821.6 525.4l2-7" stroke="#e4eadf" stroke-width="0.700"/><path d="M580.4 525.4l-2-7" stroke="#e4eadf" stroke-width="0.700"/><path d="M832.6 520.1l2-7" stroke="#e4eadf" stroke-width="0.700"/><path d="M569.4 520.1l-2-7" stroke="#e4eadf" stroke-width="0.700"/><path d="M843.6 514.8l2-7" stroke="#e4eadf" stroke-width="0.700"/><path d="M558.4 514.8l-2-7" stroke="#e4eadf" stroke-width="0.700"/><path d="M854.6 509.5l2-7" stroke="#e4eadf" stroke-width="0.700"/><path d="M547.4 509.5l-2-7" stroke="#e4eadf" stroke-width="0.700"/><path d="M865.6 504.2l2-7" stroke="#e4eadf" stroke-width="0.700"/><path d="M536.4 504.2l-2-7" stroke="#e4eadf" stroke-width="0.700"/><path d="M876.6 498.9l2-7" stroke="#e4eadf" stroke-width="0.700"/><path d="M525.4 498.9l-2-7" stroke="#e4eadf" stroke-width="0.700"/><path d="M601.2 552c-28-5-60-20-92-44 32 5 66 18 94 36z" fill="#f3f6f0" stroke="#e1e8dc" stroke-width="0.800"/><path d="M800.8 552c28-5 60-20 92-44-32 5-66 18-94 36z" fill="#f3f6f0" stroke="#e1e8dc" stroke-width="0.800"/><path d="M811.8 546.7l2-7" stroke="#e4eadf" stroke-width="0.700"/><path d="M590.2 546.7l-2-7" stroke="#e4eadf" stroke-width="0.700"/><path d="M822.8 541.4l2-7" stroke="#e4eadf" stroke-width="0.700"/><path d="M579.2 541.4l-2-7" stroke="#e4eadf" stroke-width="0.700"/><path d="M833.8 536.1l2-7" stroke="#e4eadf" stroke-width="0.700"/><path d="M568.2 536.1l-2-7" stroke="#e4eadf" stroke-width="0.700"/><path d="M844.8 530.8l2-7" stroke="#e4eadf" stroke-width="0.700"/><path d="M557.2 530.8l-2-7" stroke="#e4eadf" stroke-width="0.700"/><path d="M855.8 525.5l2-7" stroke="#e4eadf" stroke-width="0.700"/><path d="M546.2 525.5l-2-7" stroke="#e4eadf" stroke-width="0.700"/><path d="M866.8 520.2l2-7" stroke="#e4eadf" stroke-width="0.700"/><path d="M535.2 520.2l-2-7" stroke="#e4eadf" stroke-width="0.700"/><path d="M877.8 514.9l2-7" stroke="#e4eadf" stroke-width="0.700"/><path d="M524.2 514.9l-2-7" stroke="#e4eadf" stroke-width="0.700"/><path d="M600.0 568c-28-5-60-20-92-44 32 5 66 18 94 36z" fill="#f3f6f0" stroke="#e1e8dc" stroke-width="0.800"/><path d="M802.0 568c28-5 60-20 92-44-32 5-66 18-94 36z" fill="#f3f6f0" stroke="#e1e8dc" stroke-width="0.800"/><path d="M813.0 562.7l2-7" stroke="#e4eadf" stroke-width="0.700"/><path d="M589.0 562.7l-2-7" stroke="#e4eadf" stroke-width="0.700"/><path d="M824.0 557.4l2-7" stroke="#e4eadf" stroke-width="0.700"/><path d="M578.0 557.4l-2-7" stroke="#e4eadf" stroke-width="0.700"/><path d="M835.0 552.1l2-7" stroke="#e4eadf" stroke-width="0.700"/><path d="M567.0 552.1l-2-7" stroke="#e4eadf" stroke-width="0.700"/><path d="M846.0 546.8l2-7" stroke="#e4eadf" stroke-width="0.700"/><path d="M556.0 546.8l-2-7" stroke="#e4eadf" stroke-width="0.700"/><path d="M857.0 541.5l2-7" stroke="#e4eadf" stroke-width="0.700"/><path d="M545.0 541.5l-2-7" stroke="#e4eadf" stroke-width="0.700"/><path d="M868.0 536.2l2-7" stroke="#e4eadf" stroke-width="0.700"/><path d="M534.0 536.2l-2-7" stroke="#e4eadf" stroke-width="0.700"/><path d="M879.0 530.9l2-7" stroke="#e4eadf" stroke-width="0.700"/><path d="M523.0 530.9l-2-7" stroke="#e4eadf" stroke-width="0.700"/><path d="M598.8 584c-28-5-60-20-92-44 32 5 66 18 94 36z" fill="#f3f6f0" stroke="#e1e8dc" stroke-width="0.800"/><path d="M803.2 584c28-5 60-20 92-44-32 5-66 18-94 36z" fill="#f3f6f0" stroke="#e1e8dc" stroke-width="0.800"/><path d="M814.2 578.7l2-7" stroke="#e4eadf" stroke-width="0.700"/><path d="M587.8 578.7l-2-7" stroke="#e4eadf" stroke-width="0.700"/><path d="M825.2 573.4l2-7" stroke="#e4eadf" stroke-width="0.700"/><path d="M576.8 573.4l-2-7" stroke="#e4eadf" stroke-width="0.700"/><path d="M836.2 568.1l2-7" stroke="#e4eadf" stroke-width="0.700"/><path d="M565.8 568.1l-2-7" stroke="#e4eadf" stroke-width="0.700"/><path d="M847.2 562.8l2-7" stroke="#e4eadf" stroke-width="0.700"/><path d="M554.8 562.8l-2-7" stroke="#e4eadf" stroke-width="0.700"/><path d="M858.2 557.5l2-7" stroke="#e4eadf" stroke-width="0.700"/><path d="M543.8 557.5l-2-7" stroke="#e4eadf" stroke-width="0.700"/><path d="M869.2 552.2l2-7" stroke="#e4eadf" stroke-width="0.700"/><path d="M532.8 552.2l-2-7" stroke="#e4eadf" stroke-width="0.700"/><path d="M880.2 546.9l2-7" stroke="#e4eadf" stroke-width="0.700"/><path d="M521.8 546.9l-2-7" stroke="#e4eadf" stroke-width="0.700"/><path d="M597.6 600c-28-5-60-20-92-44 32 5 66 18 94 36z" fill="#f3f6f0" stroke="#e1e8dc" stroke-width="0.800"/><path d="M804.4 600c28-5 60-20 92-44-32 5-66 18-94 36z" fill="#f3f6f0" stroke="#e1e8dc" stroke-width="0.800"/><path d="M815.4 594.7l2-7" stroke="#e4eadf" stroke-width="0.700"/><path d="M586.6 594.7l-2-7" stroke="#e4eadf" stroke-width="0.700"/><path d="M826.4 589.4l2-7" stroke="#e4eadf" stroke-width="0.700"/><path d="M575.6 589.4l-2-7" stroke="#e4eadf" stroke-width="0.700"/><path d="M837.4 584.1l2-7" stroke="#e4eadf" stroke-width="0.700"/><path d="M564.6 584.1l-2-7" stroke="#e4eadf" stroke-width="0.700"/><path d="M848.4 578.8l2-7" stroke="#e4eadf" stroke-width="0.700"/><path d="M553.6 578.8l-2-7" stroke="#e4eadf" stroke-width="0.700"/><path d="M859.4 573.5l2-7" stroke="#e4eadf" stroke-width="0.700"/><path d="M542.6 573.5l-2-7" stroke="#e4eadf" stroke-width="0.700"/><path d="M870.4 568.2l2-7" stroke="#e4eadf" stroke-width="0.700"/><path d="M531.6 568.2l-2-7" stroke="#e4eadf" stroke-width="0.700"/><path d="M881.4 562.9l2-7" stroke="#e4eadf" stroke-width="0.700"/><path d="M520.6 562.9l-2-7" stroke="#e4eadf" stroke-width="0.700"/><path d="M596.4 616c-28-5-60-20-92-44 32 5 66 18 94 36z" fill="#f3f6f0" stroke="#e1e8dc" stroke-width="0.800"/><path d="M805.6 616c28-5 60-20 92-44-32 5-66 18-94 36z" fill="#f3f6f0" stroke="#e1e8dc" stroke-width="0.800"/><path d="M816.6 610.7l2-7" stroke="#e4eadf" stroke-width="0.700"/><path d="M585.4 610.7l-2-7" stroke="#e4eadf" stroke-width="0.700"/><path d="M827.6 605.4l2-7" stroke="#e4eadf" stroke-width="0.700"/><path d="M574.4 605.4l-2-7" stroke="#e4eadf" stroke-width="0.700"/><path d="M838.6 600.1l2-7" stroke="#e4eadf" stroke-width="0.700"/><path d="M563.4 600.1l-2-7" stroke="#e4eadf" stroke-width="0.700"/><path d="M849.6 594.8l2-7" stroke="#e4eadf" stroke-width="0.700"/><path d="M552.4 594.8l-2-7" stroke="#e4eadf" stroke-width="0.700"/><path d="M860.6 589.5l2-7" stroke="#e4eadf" stroke-width="0.700"/><path d="M541.4 589.5l-2-7" stroke="#e4eadf" stroke-width="0.700"/><path d="M871.6 584.2l2-7" stroke="#e4eadf" stroke-width="0.700"/><path d="M530.4 584.2l-2-7" stroke="#e4eadf" stroke-width="0.700"/><path d="M882.6 578.9l2-7" stroke="#e4eadf" stroke-width="0.700"/><path d="M519.4 578.9l-2-7" stroke="#e4eadf" stroke-width="0.700"/><path d="M595.2 632c-28-5-60-20-92-44 32 5 66 18 94 36z" fill="#f3f6f0" stroke="#e1e8dc" stroke-width="0.800"/><path d="M806.8 632c28-5 60-20 92-44-32 5-66 18-94 36z" fill="#f3f6f0" stroke="#e1e8dc" stroke-width="0.800"/><path d="M817.8 626.7l2-7" stroke="#e4eadf" stroke-width="0.700"/><path d="M584.2 626.7l-2-7" stroke="#e4eadf" stroke-width="0.700"/><path d="M828.8 621.4l2-7" stroke="#e4eadf" stroke-width="0.700"/><path d="M573.2 621.4l-2-7" stroke="#e4eadf" stroke-width="0.700"/><path d="M839.8 616.1l2-7" stroke="#e4eadf" stroke-width="0.700"/><path d="M562.2 616.1l-2-7" stroke="#e4eadf" stroke-width="0.700"/><path d="M850.8 610.8l2-7" stroke="#e4eadf" stroke-width="0.700"/><path d="M551.2 610.8l-2-7" stroke="#e4eadf" stroke-width="0.700"/><path d="M861.8 605.5l2-7" stroke="#e4eadf" stroke-width="0.700"/><path d="M540.2 605.5l-2-7" stroke="#e4eadf" stroke-width="0.700"/><path d="M872.8 600.2l2-7" stroke="#e4eadf" stroke-width="0.700"/><path d="M529.2 600.2l-2-7" stroke="#e4eadf" stroke-width="0.700"/><path d="M883.8 594.9l2-7" stroke="#e4eadf" stroke-width="0.700"/><path d="M518.2 594.9l-2-7" stroke="#e4eadf" stroke-width="0.700"/><path d="M594.0 648c-28-5-60-20-92-44 32 5 66 18 94 36z" fill="#f3f6f0" stroke="#e1e8dc" stroke-width="0.800"/><path d="M808.0 648c28-5 60-20 92-44-32 5-66 18-94 36z" fill="#f3f6f0" stroke="#e1e8dc" stroke-width="0.800"/><path d="M819.0 642.7l2-7" stroke="#e4eadf" stroke-width="0.700"/><path d="M583.0 642.7l-2-7" stroke="#e4eadf" stroke-width="0.700"/><path d="M830.0 637.4l2-7" stroke="#e4eadf" stroke-width="0.700"/><path d="M572.0 637.4l-2-7" stroke="#e4eadf" stroke-width="0.700"/><path d="M841.0 632.1l2-7" stroke="#e4eadf" stroke-width="0.700"/><path d="M561.0 632.1l-2-7" stroke="#e4eadf" stroke-width="0.700"/><path d="M852.0 626.8l2-7" stroke="#e4eadf" stroke-width="0.700"/><path d="M550.0 626.8l-2-7" stroke="#e4eadf" stroke-width="0.700"/><path d="M863.0 621.5l2-7" stroke="#e4eadf" stroke-width="0.700"/><path d="M539.0 621.5l-2-7" stroke="#e4eadf" stroke-width="0.700"/><path d="M874.0 616.2l2-7" stroke="#e4eadf" stroke-width="0.700"/><path d="M528.0 616.2l-2-7" stroke="#e4eadf" stroke-width="0.700"/><path d="M885.0 610.9l2-7" stroke="#e4eadf" stroke-width="0.700"/><path d="M517.0 610.9l-2-7" stroke="#e4eadf" stroke-width="0.700"/><path d="M664 440c4-10 14-14 24-12 8 1 13 6 14 12l-2 6c-3 3-4 8-3 14h-6l-1-10c-5 2-11 2-16 0l-1 10h-6c0-8-2-14-7-20z" fill="#f6dfd0"/><path d="M762 440c-4-10-14-14-24-12-8 1-13 6-14 12l2 6c3 3 4 8 3 14h6l1-10c5 2 11 2 16 0l1 10h6c0-8 2-14 7-20z" fill="#f6dfd0"/><path d="M611 496c30-2 60-8 90-20 30 12 60 18 90 20v78c0 36-38 58-90 72-52-14-90-36-90-72z" fill="#e6eef9" stroke="#d9e5f4" stroke-width="2"/><path d="M628 508c26-3 50-8 73-18 23 10 47 15 73 18v64c0 30-30 48-73 60-43-12-73-30-73-60z" fill="#f8d2d2"/><path d="M628 546h146v10h-146z" fill="#fdf3f3"/><path d="M696 552h10v80h-10z" fill="#fdf3f3"/><path d="M640 548c10-24 110-24 122 0z" fill="#f4f8f1" stroke="#e2ecdc" stroke-width="1.500"/><path d="M660 548v-14M680 548v-19M701 548v-21M722 548v-19M742 548v-14" stroke="#e2ecdc" stroke-width="1.200"/><circle cx="696" cy="504" r="11" fill="#fbeecb"/><circle cx="696" cy="504" r="6" fill="#f9e4b0"/><path d="M640 566l40 40M680 566l-40 40" stroke="#fbe6e6" stroke-width="5"/><circle cx="738" cy="590" r="12" fill="#fae3c0"/><path d="M548 668c50-12 100 14 152 14s110-20 160-6l-6 22c-50-10-100 6-152 6s-100-26-150-14z" fill="#f7f7f5" stroke="#ececec" stroke-width="1"/><text x="561" y="678.5" transform="rotate(-3 561 678.5)" font-family="Liberation Sans,sans-serif" font-size="10.500" font-weight="700" fill="#b9b9b9" letter-spacing="0.600">VALLE</text><text x="602" y="676.5" transform="rotate(-1.5 602 676.5)" font-family="Liberation Sans,sans-serif" font-size="10.500" font-weight="700" fill="#b9b9b9" letter-spacing="0.600">HERMOSO</text><text x="665" y="675.8" transform="rotate(0 665 675.8)" font-family="Liberation Sans,sans-serif" font-size="10.500" font-weight="700" fill="#b9b9b9" letter-spacing="0.600">TURÍSTICO</text><text x="737" y="676.5" transform="rotate(1.5 737 676.5)" font-family="Liberation Sans,sans-serif" font-size="10.500" font-weight="700" fill="#b9b9b9" letter-spacing="0.600">Y</text><text x="750" y="677.5" transform="rotate(4 750 677.5)" font-family="Liberation Sans,sans-serif" font-size="10.500" font-weight="700" fill="#b9b9b9" letter-spacing="0.600">PRODUCTIVO</text><path d="M530 706c10-12 40-16 80-14l20-6 30 8 60-2 40-8 30 10 80-4 60 6 40-4 30 18z" fill="#fdf9dc"/><path d="M600 706c30-10 60-12 100-8l40 8z" fill="#f4f7e6"/></svg><div class="a" style="left:381px;top:181px;width:634px;height:1px;background:#000;"></div><div class="a" style="left:381px;top:264px;width:634px;height:1px;background:#000;"></div><div class="a" style="left:381px;top:306px;width:634px;height:1px;background:#000;"></div><div class="a" style="left:381px;top:370px;width:634px;height:1px;background:#000;"></div><div class="a" style="left:381px;top:392px;width:634px;height:1px;background:#000;"></div><div class="a" style="left:381px;top:413px;width:634px;height:1px;background:#000;"></div><div class="a" style="left:381px;top:546px;width:634px;height:1px;background:#000;"></div><div class="a" style="left:381px;top:679px;width:634px;height:1px;background:#000;"></div><div class="a" style="left:381px;top:181px;width:1px;height:529px;background:#000;"></div><div class="a" style="left:1014px;top:181px;width:1px;height:529px;background:#000;"></div><div class="a" style="left:513px;top:392px;width:1px;height:318px;background:#000;"></div><div class="a" style="left:835px;top:392px;width:1px;height:318px;background:#000;"></div><span class="t" style="left:390.50px;top:187.00px;font-size:16px;color:#0c1a4e;font-weight:700;transform:scaleX(0.9372);-webkit-text-stroke:0.25px #0c1a4e;">3.- ANÁLISIS DE PRECIOS ACTUALES:</span><span class="t" style="left:390.50px;top:212.00px;font-size:11.4px;color:#0d1a4b;transform:scaleX(1.0456);-webkit-text-stroke:0.18px #0d1a4b;">Tomar en cuenta la variación de precios locales o importados, según corresponda. De ser necesario traer los montos</span><span class="t" style="left:390.50px;top:231.00px;font-size:11.4px;color:#0d1a4b;transform:scaleX(1.0961);-webkit-text-stroke:0.18px #0d1a4b;">a valores presentes, considerando la inflación (nacional e/o internacional); es decir, realizar el análisis a precios</span><span class="t" style="left:390.50px;top:249.00px;font-size:11.4px;color:#0d1a4b;transform:scaleX(0.9979);-webkit-text-stroke:0.18px #0d1a4b;">actuales.</span><span class="t" style="left:390.50px;top:268.00px;font-size:13.6px;color:#000;transform:scaleX(0.9774);-webkit-text-stroke:0.18px #000;">Los precios actuales varían entre $ 885,00 a los $ 261,60 más IVA teniendo en cuenta que dan todo lo</span><span class="t" style="left:390.50px;top:289.00px;font-size:13.6px;color:#000;transform:scaleX(0.9980);-webkit-text-stroke:0.18px #000;">solicitado verían en el servicio ofertado.</span><span class="t" style="left:390.50px;top:312.00px;font-size:16px;color:#0c1a4e;font-weight:700;transform:scaleX(0.9594);-webkit-text-stroke:0.25px #0c1a4e;">4.- PROFORMAS DE PROVEEDORES:</span><span class="t" style="left:390.50px;top:337.00px;font-size:11.4px;color:#0d1a4b;transform:scaleX(1.0615);-webkit-text-stroke:0.18px #0d1a4b;">Siempre que sea posible, se exhorta a las entidades contratantes a que cuenten con al menos tres proformas.</span><span class="t" style="left:390.50px;top:356.00px;font-size:11.4px;color:#0d1a4b;transform:scaleX(1.0741);-webkit-text-stroke:0.18px #0d1a4b;">Se deberá adjuntar proformas auténticas de los productos a contratar.</span><span class="t" style="left:420.50px;top:397.00px;font-size:12.2px;color:#0c1a4e;font-weight:700;transform:scaleX(1.0519);-webkit-text-stroke:0.25px #0c1a4e;">Proforma</span><span class="t" style="left:643.30px;top:397.00px;font-size:12.2px;color:#0c1a4e;font-weight:700;transform:scaleX(1.0647);-webkit-text-stroke:0.25px #0c1a4e;">Proveedor</span><span class="t" style="left:862.00px;top:397.00px;font-size:12.2px;color:#0c1a4e;font-weight:700;transform:scaleX(1.0733);-webkit-text-stroke:0.25px #0c1a4e;">Valor de la proforma</span><span class="t" style="left:390.50px;top:418.00px;font-size:12.2px;color:#0c1a4e;font-weight:700;transform:scaleX(1.0350);-webkit-text-stroke:0.25px #0c1a4e;">Proforma 1:</span><span class="t" style="left:522.50px;top:418.00px;font-size:12.4px;color:#0c1a4e;font-weight:700;transform:scaleX(0.9617);-webkit-text-stroke:0.25px #0c1a4e;">OSCAR ALEJANDRO PINTO ESPINOZA</span><span class="t" style="left:522.50px;top:439.00px;font-size:12.4px;color:#0c1a4e;font-weight:700;transform:scaleX(0.9778);-webkit-text-stroke:0.25px #0c1a4e;">(LUGAR DE RESIDENCIA QUITO)</span><div class="a" style="left:522.0px;top:463.3px;width:5px;height:5px;border-radius:50%;background:#0c1a4e"></div><span class="t" style="left:533.30px;top:460.00px;font-size:12px;color:#15224a;transform:scaleX(1.0425);-webkit-text-stroke:0.18px #15224a;">LONAS PARA POSTER DE DOCTORES DE SUELO</span><span class="t" style="left:533.30px;top:478.00px;font-size:12px;color:#15224a;transform:scaleX(1.0482);-webkit-text-stroke:0.18px #15224a;">(LONA DE 13 ONZA-MEDIDA DE 0.80CM X 1.20CM</span><span class="t" style="left:533.30px;top:496.00px;font-size:12px;color:#15224a;transform:scaleX(1.0667);-webkit-text-stroke:0.18px #15224a;">CADA UNA)</span><div class="a" style="left:522.0px;top:518.3px;width:5px;height:5px;border-radius:50%;background:#0c1a4e"></div><span class="t" style="left:533.30px;top:515.00px;font-size:12px;color:#15224a;transform:scaleX(1.0615);-webkit-text-stroke:0.18px #15224a;">IMPRESIONES DE LÁSER TAMAÑO A4 EN PAPEL</span><span class="t" style="left:533.30px;top:533.00px;font-size:12px;color:#15224a;transform:scaleX(0.9915);-webkit-text-stroke:0.18px #15224a;">DOBLE CARA</span><span class="t" style="left:843.50px;top:418.00px;font-size:12.3px;color:#15224a;transform:scaleX(1.0675);-webkit-text-stroke:0.18px #15224a;">$ 372,00 + IVA.</span><span class="t" style="left:390.50px;top:551.00px;font-size:12.2px;color:#0c1a4e;font-weight:700;transform:scaleX(1.0350);-webkit-text-stroke:0.25px #0c1a4e;">Proforma 2:</span><span class="t" style="left:522.50px;top:551.00px;font-size:12.4px;color:#0c1a4e;font-weight:700;transform:scaleX(0.9638);-webkit-text-stroke:0.25px #0c1a4e;">EDISON BOLIVAR PONCE FUENTES</span><span class="t" style="left:522.50px;top:572.00px;font-size:12.4px;color:#0c1a4e;font-weight:700;transform:scaleX(0.9957);-webkit-text-stroke:0.25px #0c1a4e;">(LUGAR DE RESIDENCIA ATUNTAQUI)</span><div class="a" style="left:524.5px;top:596.3px;width:5px;height:5px;border-radius:50%;background:#0c1a4e"></div><span class="t" style="left:533.30px;top:593.00px;font-size:12px;color:#15224a;transform:scaleX(1.0425);-webkit-text-stroke:0.18px #15224a;">LONAS PARA POSTER DE DOCTORES DE SUELO</span><span class="t" style="left:533.30px;top:611.00px;font-size:12px;color:#15224a;transform:scaleX(1.0482);-webkit-text-stroke:0.18px #15224a;">(LONA DE 13 ONZA-MEDIDA DE 0.80CM X 1.20CM</span><span class="t" style="left:533.30px;top:629.00px;font-size:12px;color:#15224a;transform:scaleX(1.0667);-webkit-text-stroke:0.18px #15224a;">CADA UNA)</span><div class="a" style="left:524.5px;top:651.3px;width:5px;height:5px;border-radius:50%;background:#0c1a4e"></div><span class="t" style="left:533.30px;top:648.00px;font-size:12px;color:#15224a;transform:scaleX(1.0615);-webkit-text-stroke:0.18px #15224a;">IMPRESIONES DE LÁSER TAMAÑO A4 EN PAPEL</span><span class="t" style="left:533.30px;top:666.00px;font-size:12px;color:#15224a;transform:scaleX(0.9915);-webkit-text-stroke:0.18px #15224a;">DOBLE CARA</span><span class="t" style="left:843.50px;top:551.00px;font-size:12.3px;color:#15224a;transform:scaleX(1.0675);-webkit-text-stroke:0.18px #15224a;">$ 620,00 + IVA.</span><span class="t" style="left:390.50px;top:684.00px;font-size:12.2px;color:#0c1a4e;font-weight:700;transform:scaleX(1.0350);-webkit-text-stroke:0.25px #0c1a4e;">Proforma 3:</span><span class="t" style="left:525.00px;top:684.00px;font-size:12px;color:#0c1a4e;font-weight:700;transform:scaleX(1.0113);-webkit-text-stroke:0.25px #0c1a4e;">JAIRO SANTIAGO ROJAS MENA</span><span class="t" style="left:843.50px;top:684.00px;font-size:12.3px;color:#1b2950;transform:scaleX(1.0077);-webkit-text-stroke:0.18px #1b2950;">$ 265,00 + NO INLCLUYE</span><span class="t" style="left:525.00px;top:705.00px;font-size:12.4px;color:#0c1a4e;font-weight:700;transform:scaleX(0.9778);-webkit-text-stroke:0.25px #0c1a4e;">(LUGAR DE RESIDENCIA QUITO)</span></div></div><span class="t" style="left:1030.00px;top:653.00px;font-size:19px;color:rgba(120,120,120,0.48);transform:scaleX(1.0540);">Activar Windows</span><span class="t" style="left:1030.00px;top:678.00px;font-size:14px;color:rgba(120,120,120,0.45);transform:scaleX(1.0580);">Ve a Configuración para activar Windows.</span><div class="a" style="left:1344px;top:183px;width:15px;height:521px;background:#f1f1f1;"></div><div class="a" style="left:1344px;top:183px;width:15px;height:15px;background:#fff;border:1px solid #8f8f8f"></div><svg style="left:1348px;top:188px" width="7" height="4" viewBox="0 0 7 4" ><path d="M0 4h7l-3.500-4z" fill="#111"/></svg><div class="a" style="left:1344px;top:391px;width:15px;height:75px;background:#fff;border:1px solid #8f8f8f"></div><div class="a" style="left:1344px;top:689px;width:15px;height:15px;background:#fff;border:1px solid #8f8f8f"></div><svg style="left:1348px;top:695px" width="7" height="4" viewBox="0 0 7 4" ><path d="M0 0h7l-3.500 4z" fill="#111"/></svg><div class="a" style="left:0px;top:706px;width:1360px;height:22px;background:#f3f3f3;border-top:1px solid #cacaca"></div><span class="t" style="left:12.00px;top:711.00px;font-size:12px;color:#3b3b3b;transform:scaleX(0.9316);">Página 2 de 3</span><span class="t" style="left:100.00px;top:711.00px;font-size:12px;color:#3b3b3b;transform:scaleX(0.9223);">999 palabras</span><svg style="left:184px;top:710px" width="14" height="14" viewBox="0 0 14 14" ><path d="M0.500 1.500h5l1.500 1.500v9.500l-1.500-1.500h-5zM7 3l1.500-1.500h2.500M13.500 6v5.500h-5l-1.500 1.500" fill="none" stroke="#777" stroke-width="1"/><path d="M8.500 4.500l2 2 3.500-4.500" fill="none" stroke="#777" stroke-width="1.100"/></svg><span class="t" style="left:216.00px;top:711.00px;font-size:12px;color:#3b3b3b;transform:scaleX(0.9156);">Español (Ecuador)</span><svg style="left:326px;top:709px" width="16" height="16" viewBox="0 0 16 16" ><circle cx="6.500" cy="8" r="5.500" fill="none" stroke="#555" stroke-width="1" stroke-dasharray="3 2"/><path d="M6.500 1v6.500h3" fill="none" stroke="#555" stroke-width="1"/><path d="M8.500 8.500l6 6M14.500 8.500l-6 6" stroke="#222" stroke-width="1.700"/></svg><span class="t" style="left:345.00px;top:711.00px;font-size:12px;color:#222;font-weight:700;transform:scaleX(0.8738);">Accesibilidad: es necesario investigar</span><svg style="left:1073px;top:710px" width="14" height="13" viewBox="0 0 14 13" ><path d="M7 1.500v11M7 1.500c-2-1-4.500-1-6.500 0v10c2-1 4.500-1 6.500 0.500c2-1.500 4.500-1.500 6.500-0.500v-10c-2-1-4.500-1-6.500 0z" fill="none" stroke="#5a5a5a" stroke-width="1"/><path d="M2 3.500h3.500M2 5.500h3.500M2 7.500h3.500M2 9.500h3.500M8.500 3.500h3.500M8.500 5.500h3.500M8.500 7.500h3.500M8.500 9.500h3.500" stroke="#5a5a5a" stroke-width="1"/></svg><div class="a" style="left:1100px;top:707px;width:40px;height:21px;background:#c6c6c6;"></div><svg style="left:1113px;top:710px" width="14" height="13" viewBox="0 0 14 13" ><rect x="0.500" y="0.500" width="13" height="12" fill="none" stroke="#555" stroke-width="1"/><path d="M2.500 3.500h9M2.500 5.500h9M2.500 7.500h9M2.500 9.500h9" stroke="#555" stroke-width="1"/></svg><svg style="left:1153px;top:710px" width="15" height="14" viewBox="0 0 15 14" ><path d="M0.500 0.500h10v5M0.500 0.500v10.500h5.500" fill="none" stroke="#5a5a5a" stroke-width="1"/><path d="M2.500 3.500h6M2.500 5.500h5M2.500 7.500h3.500" stroke="#5a5a5a" stroke-width="1"/><circle cx="10.500" cy="9.500" r="3.700" fill="#5f5f5f"/><path d="M7.500 8.500c1.500 1 3 0.500 3.500-1.500M10 13c0.500-1.500 2-2 3.500-1.500" fill="none" stroke="#e8e8e8" stroke-width="0.900"/></svg><div class="a" style="left:1186px;top:716px;width:8px;height:1px;background:#444;"></div><div class="a" style="left:1199px;top:716px;width:100px;height:1px;background:#555;"></div><div class="a" style="left:1247px;top:711px;width:5px;height:11px;background:#444;"></div><div class="a" style="left:1304px;top:716px;width:7px;height:1px;background:#444;"></div><div class="a" style="left:1307px;top:713px;width:1px;height:7px;background:#444;"></div><span class="t" style="left:1325.50px;top:711.00px;font-size:12.3px;color:#2a2a2a;transform:scaleX(0.8266);">100%</span><div class="a" style="left:0px;top:728px;width:1360px;height:40px;background:#111111;"></div><div class="a" style="left:0px;top:728px;width:48px;height:40px;background:#080808;"></div><svg style="left:16px;top:740px" width="17" height="17" viewBox="0 0 17 17" ><path d="M0 2.400l6.900-1v6.600h-6.900zM7.800 1.300l9.200-1.300v8h-9.200zM0 8.900h6.900v6.600l-6.900-1zM7.800 8.900h9.200v8.100l-9.200-1.300z" fill="#fff"/></svg><div class="a" style="left:48px;top:728px;width:344px;height:40px;background:#f2f2f2;border-top:1px solid #b5b5b5"></div><svg style="left:60px;top:740px" width="18" height="17" viewBox="0 0 18 17" ><circle cx="11" cy="6.500" r="5.300" fill="none" stroke="#222" stroke-width="1.400"/><path d="M7 10.500l-6.500 6" stroke="#222" stroke-width="1.400"/></svg><span class="t" style="left:88.00px;top:741.00px;font-size:15.5px;color:#2b2b2b;transform:scaleX(0.9343);">Escribe aquí para buscar</span><div class="a" style="left:591px;top:728px;width:48px;height:40px;background:#343434"></div><div class="a" style="left:497px;top:766px;width:40px;height:2px;background:#76b9ed"></div><div class="a" style="left:591px;top:766px;width:48px;height:2px;background:#76b9ed"></div><div class="a" style="left:693px;top:766px;width:40px;height:2px;background:#76b9ed"></div><div class="a" style="left:742px;top:766px;width:40px;height:2px;background:#76b9ed"></div><div class="a" style="left:791px;top:766px;width:30px;height:2px;background:#76b9ed"></div><div class="a" style="left:840px;top:766px;width:40px;height:2px;background:#76b9ed"></div><div class="a" style="left:822px;top:766px;width:8px;height:2px;background:#5b87ad"></div><svg style="left:300px;top:729px" width="92" height="39" viewBox="0 0 92 39"><defs><clipPath id="sh"><rect width="92" height="39"/></clipPath><linearGradient id="mg" x1="0" y1="0" x2="1" y2="0"><stop offset="0.1" stop-color="#d6d544"/><stop offset="0.5" stop-color="#c3c93d"/><stop offset="1" stop-color="#a4b43a"/></linearGradient><linearGradient id="sg" x1="0" y1="0" x2="1" y2="0"><stop offset="0" stop-color="#8a8a86"/><stop offset="0.35" stop-color="#d4d4d0"/><stop offset="0.7" stop-color="#c4c4c0"/><stop offset="1" stop-color="#77776f"/></linearGradient></defs><g clip-path="url(#sh)">
<path d="M13 39C15 29 29 21 46 18.500C60 16.500 80 17 92 19V39z" fill="url(#mg)"/>
<path d="M78 16c4-3 9-4 14-4v7l-14 0.500z" fill="#8a9a5a"/>
<ellipse cx="54.500" cy="28.500" rx="31" ry="6" fill="none" stroke="#8e9a2c" stroke-width="1.400"/>
<path d="M33 24l1-17c3-3 10-4.500 16-4l7 1 3 2h9l1 3 1 15-5 1-1-14c-0.500-3-3.500-3-4 0l-0.500 13-8 0.500 0-14c-1-4-6-4-7 0l-0.500 14z" fill="url(#sg)"/>
<path d="M33 24l1-14c1-2 3-2 4 0l0 12 2-1-0.500 4z" fill="#6f6f6b"/>
<path d="M60 6h9l1 3 1 15-3 0.500-1-14c-0.500-3-3.500-3-4 0l-0.500 13-2.500 0.500z" fill="#7d7d78"/>
<path d="M33 24l9-5 4 3 12 0 14 2 6 4-17 1-24-1z" fill="#c9c9c6"/>
<path d="M60 24l12 0 6 4-18 1z" fill="#8a8a86"/>
</g></svg><div class="a" style="left:300px;top:766px;width:13px;height:2px;background:#c4c4c4"></div><svg style="left:407px;top:736px" width="24" height="24" viewBox="0 0 24 24"><defs><linearGradient id="e1" x1="0" y1="0" x2="1" y2="1"><stop offset="0" stop-color="#35c1f1"/><stop offset="1" stop-color="#0c59a4"/></linearGradient><linearGradient id="e2" x1="0" y1="0" x2="1" y2="0"><stop offset="0" stop-color="#2fbfdc"/><stop offset="1" stop-color="#6ad94b"/></linearGradient></defs>
<circle cx="12" cy="12" r="11.500" fill="url(#e1)"/><path d="M0.700 10.500c1-6 6-10 11.500-10 6.500 0 11.300 4.500 11.300 9.500 0 3.500-2.800 6-6 6-2.500 0-3.500-1.200-3.200-2 0.500-1 1-1.500 1-3 0-2.500-2.500-4.500-5.500-4.500-4 0-7.500 2-9.100 4z" fill="url(#e2)"/><path d="M9.500 22.800c-3.500-1.500-5.500-5-5-8.500 0.400-3 2.500-5 5-5.500-2 2-2 5 0 8 1.500 2.300 4.500 3.500 7.500 3-2 2.500-5 3.500-7.500 3z" fill="#0b4f94"/><path d="M14 14.800c1.500 1.500 4 2 6.300 1.400 1.500-0.400 2.600-1.100 3.400-2-0.300 2.400-1.500 4.600-3.400 6.200-3.300 0.300-5.800-1.800-6.300-5.600z" fill="#111"/></svg><svg style="left:456px;top:736px" width="24" height="24" viewBox="0 0 24 24"><defs><clipPath id="c1"><circle cx="12" cy="12" r="11.500"/></clipPath></defs><g clip-path="url(#c1)"><rect width="24" height="24" fill="#e33b2e"/><path d="M12 12L-2 4v24h12z" fill="#2da94f"/><path d="M12 12l12-4v20h-16z" fill="#fdd23f"/><path d="M0 0h24v8.500h-12z" fill="#e33b2e"/><path d="M12 12L1.500 5.500 0 0h1z" fill="#e33b2e"/></g><circle cx="12" cy="12" r="5.400" fill="#fff"/><circle cx="12" cy="12" r="4.300" fill="#4285f4"/></svg><svg style="left:505px;top:738px" width="24" height="20" viewBox="0 0 24 20"><path d="M1 2.500a1 1 0 0 1 1-1h7l2 2h11a1 1 0 0 1 1 1v13.500h-22z" fill="#f3b62d"/><path d="M1 6h22v12a1 1 0 0 1-1 1h-20a1 1 0 0 1-1-1z" fill="#fcd462"/><path d="M5 12h14v7h-14z" fill="#3f8ed6"/><path d="M8.500 15h7v4h-7z" fill="#fcd462"/></svg><svg style="left:554px;top:736px" width="24" height="24" viewBox="0 0 24 24"><defs><radialGradient id="ff" cx="0.600" cy="0.200" r="0.900"><stop offset="0" stop-color="#ffe34a"/><stop offset="0.450" stop-color="#ff8a1f"/><stop offset="1" stop-color="#e8203d"/></radialGradient></defs><path d="M12 1.500c2 1 3.500 2.500 4.500 4.500 0.500-1 0.500-2 0.300-3 4 2.500 6.700 6 6.700 10.500 0 6-5 10-11.500 10s-11.500-4.500-11.500-10.500c0-3 1-5.500 3-7.500 0 1.500 0.500 2.500 1 3 1.500-3 4.500-5.500 7.500-7z" fill="url(#ff)"/><circle cx="12.500" cy="13.500" r="5.500" fill="#8b3fd0"/><path d="M7 13c1-2 3-3 5.500-2.500 1.500 0.300 3 0 3.500-1-2-2-6-2-8 0-0.700 1-1 2-1 3.500z" fill="#ff9a2a"/><circle cx="13" cy="14.500" r="3.300" fill="#5a2fb0"/></svg><svg style="left:602px;top:736px" width="25" height="24" viewBox="0 0 25 24"><path d="M8 1.500h15a1.500 1.500 0 0 1 1.500 1.500v4.500h-16.500z" fill="#41a5ee"/><path d="M8 7.500h16.500v5.500h-16.500z" fill="#2b7cd3"/><path d="M8 13h16.500v5h-16.500z" fill="#185abd"/><path d="M8 18h16.500v3.500a1.500 1.500 0 0 1-1.500 1.500h-15z" fill="#103f91"/><rect x="0.500" y="6" width="13" height="13" rx="1.200" fill="#185abd"/><path d="M3 9l1.700 7 2.300-7 2.300 7 1.700-7" fill="none" stroke="#fff" stroke-width="1.500"/></svg><svg style="left:651px;top:736px" width="25" height="24" viewBox="0 0 25 24"><path d="M8 1.500h15a1.500 1.500 0 0 1 1.500 1.500v4.500h-16.500z" fill="#21a366"/><path d="M8 7.500h16.500v5.500h-16.500z" fill="#107c41"/><path d="M16 1.500h7a1.500 1.500 0 0 1 1.500 1.500v4.500h-8.500z" fill="#33c481"/><path d="M8 13h16.500v5h-16.500z" fill="#185c37"/><path d="M16 13h8.500v5h-8.500z" fill="#107c41"/><path d="M8 18h16.500v3.500a1.500 1.500 0 0 1-1.500 1.500h-15z" fill="#0e4f2d"/><rect x="0.500" y="6" width="13" height="13" rx="1.200" fill="#107c41"/><path d="M4 9l6 7M10 9l-6 7" stroke="#fff" stroke-width="1.700"/></svg><svg style="left:700px;top:736px" width="24" height="24" viewBox="0 0 24 24"><circle cx="12" cy="12" r="11.500" fill="#1ed760"/><path d="M5.500 8.500c4.500-1.300 9.500-1 13.500 1.200M6.500 12.300c3.800-1 7.800-0.700 11 1.200M7.500 15.800c3-0.700 6-0.500 8.500 1" fill="none" stroke="#111" stroke-width="1.900" stroke-linecap="round"/></svg><svg style="left:749px;top:736px" width="24" height="24" viewBox="0 0 24 24"><defs><clipPath id="c2"><circle cx="12" cy="12" r="11.500"/></clipPath></defs><g clip-path="url(#c2)"><rect width="24" height="24" fill="#e33b2e"/><path d="M12 12L-2 4v24h12z" fill="#2da94f"/><path d="M12 12l12-4v20h-16z" fill="#fdd23f"/><path d="M0 0h24v8.500h-12z" fill="#e33b2e"/><path d="M12 12L1.500 5.500 0 0h1z" fill="#e33b2e"/></g><circle cx="12" cy="12" r="5.400" fill="#fff"/><circle cx="12" cy="12" r="4.300" fill="#4285f4"/></svg><svg style="left:760px;top:747px" width="14" height="14" viewBox="0 0 14 14"><circle cx="7" cy="7" r="6.800" fill="#9db8cf"/><circle cx="7" cy="7" r="6.800" fill="none" stroke="#d8e2ea" stroke-width="0.800"/><path d="M4 12.500c0-4 6-4 6 0z" fill="#e8dcc8"/><circle cx="7" cy="5" r="2" fill="#4a3a30"/><path d="M5.500 7h3v3h-3z" fill="#d9c9b0"/></svg><svg style="left:799px;top:737px" width="23" height="23" viewBox="0 0 23 23"><rect x="0.500" y="0.500" width="22" height="22" rx="3.500" fill="#c8130d"/><path d="M5 17c1.500-0.500 4-4.500 5-8.500 0.500-2 0.300-4-0.700-4s-1.200 2-0.300 4.500c1 3 4 6 7 6.500 2 0.300 2.500-1.200 1-1.700-3-0.800-9 1-12 3.200z" fill="none" stroke="#fff" stroke-width="1.300"/></svg><svg style="left:846px;top:735px" width="28" height="26" viewBox="0 0 28 26"><path d="M11 8c-6 0-10.500 3.500-10.500 8s4 7 8.500 7c2 0 2.500-1 2.500-2s1-2 2.500-2c5 0 8-2 8-5 0-4-5-6-11-6z" fill="#dfe6ee" stroke="#8fa3b8" stroke-width="0.800"/><circle cx="6" cy="13" r="1.700" fill="#e2483d"/><circle cx="10.500" cy="11" r="1.700" fill="#f2b632"/><circle cx="15.500" cy="11.500" r="1.700" fill="#4aa84a"/><circle cx="5" cy="17.500" r="1.700" fill="#3d7fd6"/><path d="M24.500 1l2 1.200-9.500 17-2.500-1.500z" fill="#d89a4a"/><path d="M15 17.500l2.500 1.500-2 4.500-2-1z" fill="#b9772c"/><path d="M25 0.500l1.800 1-1.300 2.300-1.800-1z" fill="#f0d9b0"/></svg><svg style="left:1116px;top:744px" width="12" height="7" viewBox="0 0 12 7" ><path d="M1 6.500l5-5 5 5" fill="none" stroke="#fff" stroke-width="1.300"/></svg><svg style="left:1140px;top:740px" width="14" height="16" viewBox="0 0 14 16" ><rect x="2.500" y="4.500" width="7" height="7" rx="1.500" fill="none" stroke="#fff" stroke-width="1.100"/><path d="M9.500 7l3-1.500v5l-3-1.500" fill="none" stroke="#fff" stroke-width="1.100"/><path d="M3 2.500c2-2 5-2 7 0M3 13.500c2 2 5 2 7 0" fill="none" stroke="#fff" stroke-width="1"/></svg><svg style="left:1162px;top:741px" width="16" height="15" viewBox="0 0 16 15" ><rect x="4.500" y="1.500" width="11" height="8" fill="none" stroke="#fff" stroke-width="1.100"/><path d="M8 12.500h4M10 9.500v3" stroke="#fff" stroke-width="1.100"/><rect x="0.500" y="0.500" width="4" height="5" fill="#111" stroke="#fff" stroke-width="1"/><path d="M2.500 5.500v7.500h4" fill="none" stroke="#fff" stroke-width="1"/></svg><svg style="left:1186px;top:741px" width="17" height="14" viewBox="0 0 17 14" ><path d="M0.500 5h3l3.500-3.500v11l-3.500-3.500h-3z" fill="none" stroke="#fff" stroke-width="1.100"/><path d="M9.500 4.500c1.300 1.300 1.300 3.700 0 5M11.500 2.500c2.400 2.400 2.400 6.600 0 9" fill="none" stroke="#fff" stroke-width="1"/><path d="M13.500 0.800c3.300 3.300 3.300 9.100 0 12.400" fill="none" stroke="#888" stroke-width="1"/></svg><span class="t" style="left:1215.50px;top:743.00px;font-size:12.5px;color:#fff;transform:scaleX(0.7595);">ESP</span><span class="t" style="left:1260.50px;top:734.00px;font-size:12.5px;color:#fff;transform:scaleX(0.8312);">09:21</span><span class="t" style="left:1248.50px;top:752.00px;font-size:12.5px;color:#fff;transform:scaleX(0.9351);">25/1/2024</span><svg style="left:1319px;top:740px" width="16" height="16" viewBox="0 0 16 16" ><path d="M0.600 0.600h14.800v12h-5l-2.400 2.400-2.400-2.400h-5z" fill="none" stroke="#fff" stroke-width="1.100"/></svg><div class="a" style="left:1355px;top:728px;width:1px;height:40px;background:#555;"></div></body></html>
